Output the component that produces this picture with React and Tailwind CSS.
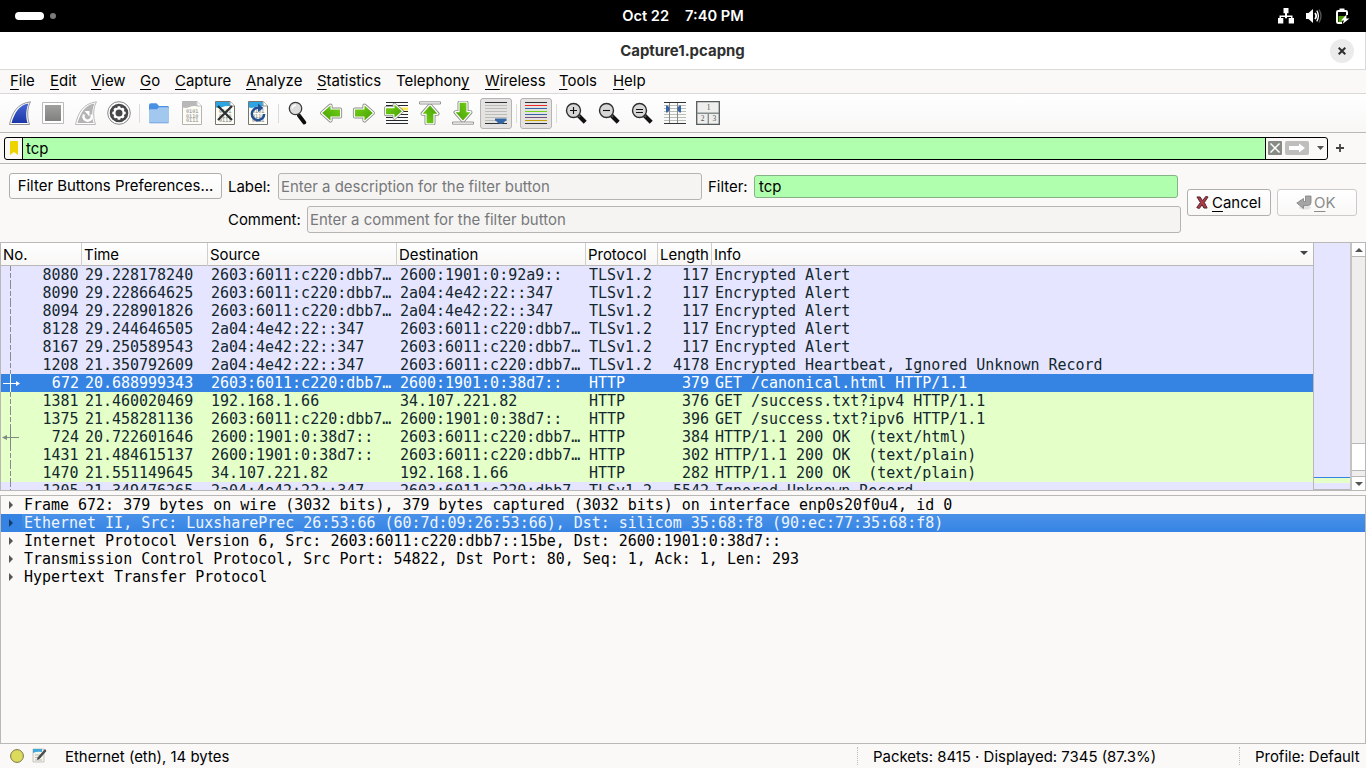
import React from 'react';

const Svg = ({ children, className = '' }) => (
  <svg viewBox="0 0 24 24" className={'h-6 w-6 ' + className}>{children}</svg>
);
const Slot = ({ children }) => <div className="mr-[9px] flex h-6 w-6 shrink-0 items-center justify-center">{children}</div>;
const Sep = () => <div className="-ml-px mr-[7px] h-[19px] w-px shrink-0 bg-[#dcdbda]" />;

const FIN = 'M1.5 23.5C4 12 9 2.5 22.5.8C19.5 6 18.5 15 21.5 23.5Z';
const FIN_IN = 'M3.5 22C6.5 12 11 4 20.5 2.5C18 8 17.5 16 19.6 22Z';

function Doc({ gray, children }) {
  return (
    <Svg>
      <path d="M2.5.5H17L21.5 5V23.5H2.5Z" fill="#fdfdf6" stroke={gray ? '#b4b4b4' : '#74766f'} />
      <path d="M3 1H16.5L17 5.5C11 3.5 8 8.5 3 6.5Z" fill={gray ? '#b9b9b9' : '#2da5e3'} />
      <path d="M17 .5V5H21.5" fill="#fff" stroke={gray ? '#b4b4b4' : '#74766f'} strokeWidth=".8" />
      <g fontFamily="DejaVu Sans Mono, monospace" fontSize="5.2" fontWeight="700" fill={gray ? '#a6a6a6' : '#9c9d98'}>
        <text x="6" y="12">0101</text>
        <text x="6" y="16.5">0110</text>
        <text x="6" y="21">0111</text>
      </g>
      {children}
    </Svg>
  );
}

const ARROW_R = 'M3 8.6H12.5V4.6L20.8 12L12.5 19.4V15.4H3Z';
function Arrow({ transform }) {
  return (
    <g transform={transform}>
      <path d={ARROW_R} fill="#fff" stroke="#8b8d89" strokeWidth="4.2" strokeLinejoin="round" />
      <path d={ARROW_R} fill="#fff" stroke="#fff" strokeWidth="2.4" strokeLinejoin="round" />
      <path d={ARROW_R} fill="url(#green)" />
    </g>
  );
}

function Lens({ sign }) {
  return (
    <Svg>
      <path d="M14 14L21.2 21.2" stroke="#111" strokeWidth="4.2" />
      <path d="M13 13L16 16" stroke="#555" strokeWidth="2" />
      <circle cx="9.5" cy="9.5" r="7" fill="#d7d7d7" stroke="#2c2d2d" strokeWidth="1.4" />
      <path d={sign === '+' ? 'M6 9.5H13M9.5 6V13' : sign === '-' ? 'M6 9.5H13' : 'M6 8.5H13M6 11.5H13'} stroke="#111" strokeWidth="1.1" />
    </Svg>
  );
}

function Toolbar() {
  return (
    <div className="flex h-[39px] items-center border-b border-[#b9b8b6] bg-gradient-to-b from-white to-[#f8f7f6] pl-2">
      <Slot><Svg>
        <defs>
          <linearGradient id="green" x1="0" y1="0" x2="1" y2="1">
            <stop offset="0" stopColor="#73d216" />
            <stop offset="1" stopColor="#489f05" />
          </linearGradient>
          <linearGradient id="fin" x1="0" y1="0" x2="0" y2="1"><stop stopColor="#4866d7" /><stop offset="1" stopColor="#1a36a6" /></linearGradient>
        </defs>
        <path d={FIN} fill="#fff" stroke="#929292" /><path d={FIN_IN} fill="url(#fin)" />
      </Svg></Slot>
      <Slot><Svg>
        <defs><linearGradient id="stop" x1="0" y1="0" x2="0" y2="1"><stop stopColor="#a0a09e" /><stop offset="1" stopColor="#80807e" /></linearGradient></defs>
        <path d="M1.5 1.5H22.5V22.5H1.5Z" fill="#fff" stroke="#bababa" /><path d="M4 4H20V20H4Z" fill="url(#stop)" />
      </Svg></Slot>
      <Slot><Svg>
        <path d={FIN} fill="#fff" stroke="#bababa" /><path d={FIN_IN} fill="#b4b4b2" />
        <path d="M10 13.500A4.200 4.200 0 1 0 17.300 13.500" fill="none" stroke="#fff" strokeWidth="2.400" />
        <path d="M10.500 10H15.500V15.500Z" fill="#fff" />
      </Svg></Slot>
      <Slot><Svg>
        <circle cx="12" cy="12" r="11.300" fill="#fff" stroke="#868686" />
        <circle cx="12" cy="12" r="9.300" fill="#454647" />
        <circle cx="12" cy="12" r="4.600" fill="none" stroke="#fff" strokeWidth="2.200" />
        <g stroke="#fff" strokeWidth="2.600"><path d="M12 5.300V8M12 16V18.700M5.300 12H8M16 12H18.700M7.300 7.300L9 9M15 15L16.700 16.700M7.300 16.700L9 15M15 9L16.700 7.300" /></g>
      </Svg></Slot>
      <Sep />
      <Slot><Svg>
        <path d="M2 4.2Q2 2.3 4 2.3H9.5L12 5H20.5Q22 5 22 6.5V12H2Z" fill="#4a90e2" />
        <path d="M2 9.5Q2 8.2 3.3 8.2H10L12 6.2H20.7Q22 6.2 22 7.5V20.8Q22 22.2 20.5 22.2H3.5Q2 22.2 2 20.8Z" fill="#a3c8f0" />
        <path d="M2.4 21.7H21.6" stroke="#78aae3" />
      </Svg></Slot>
      <Slot><Doc gray /></Slot>
      <Slot><Doc><path d="M5 5L19 19M19 5L5 19" stroke="#2b3033" strokeWidth="2.2" /></Doc></Slot>
      <Slot><Doc><path d="M12.5 6.8A6.2 6.2 0 1 0 18.2 13" fill="none" stroke="#214f94" strokeWidth="2.4" /><path d="M12 2.5L17.5 7L12 11Z" fill="#214f94" /></Doc></Slot>
      <Sep />
      <Slot><Svg>
        <path d="M13 14.5L18.3 21.500" stroke="#0c0c0c" strokeWidth="3.800" strokeLinecap="round" />
        <path d="M12 12.800L14 15.500" stroke="#222" strokeWidth="2" />
        <circle cx="9.500" cy="7.500" r="6.200" fill="#dcdddd" stroke="#3b3b3b" strokeWidth="1.300" />
        <path d="M6.200 7.500A3.500 3.500 0 0 1 10 4.300" fill="none" stroke="#fff" strokeWidth="1.400" />
      </Svg></Slot>
      <Slot><Svg><Arrow transform="matrix(-1 0 0 1 24 0)" /></Svg></Slot>
      <Slot><Svg><Arrow /></Svg></Slot>
      <Slot><Svg className="overflow-visible">
        <path d="M1 1.5H23M1 4.5H23M1 16.5H23M1 19.5H23M1 22.5H23M1 13.5H23M1 10.5H23" stroke="#252b2c" />
        <path d="M16 6.500H23V9.500H16Z" fill="#fce94f" />
        <Arrow transform="translate(-1.800 -.600) scale(.9)" />
      </Svg></Slot>
      <Slot><Svg>
        <Arrow transform="translate(0 25.200) rotate(-90)" />
        <path d="M1.500 .8H22.500V3H1.500Z" fill="#fff" stroke="#8b8d89" strokeWidth=".9" />
      </Svg></Slot>
      <Slot><Svg>
        <Arrow transform="translate(24 -1.200) rotate(90)" />
        <path d="M1.500 21H22.500V23.200H1.500Z" fill="#fff" stroke="#8b8d89" strokeWidth=".9" />
      </Svg></Slot>
      <div className="-ml-1 mr-[5px] flex h-[31px] w-8 shrink-0 items-center justify-center rounded-[3px] border border-[#b5b4b2] bg-[#e4e3e1]"><Svg>
        <path d="M1 1.5H23M1 22.5H23" stroke="#2e3436" />
        <path d="M1 4.5H23M1 7.5H23M1 10.5H23M1 13.5H23M1 16.5H23M1 19.5H23" stroke="#babdb6" />
        <path d="M11 17.5H22.5V19.5Q20.5 20 19.5 22Q17 24 14 22Q13 20 11 19.5Z" fill="#3465a4" />
      </Svg></div>
      <Sep />
      <div className="-ml-1 mr-[5px] flex h-[31px] w-8 shrink-0 items-center justify-center rounded-[3px] border border-[#b5b4b2] bg-[#e4e3e1]"><Svg>
        <path d="M1 1.5H23M1 22.5H23" stroke="#2e3436" />
        <path d="M1 4.5H23" stroke="#ef2929" /><path d="M1 7.5H23" stroke="#3465a4" />
        <path d="M1 10.5H23" stroke="#73d216" /><path d="M1 13.5H23" stroke="#3465a4" />
        <path d="M1 16.5H23" stroke="#75507b" /><path d="M1 19.5H23" stroke="#c4a000" />
      </Svg></div>
      <Sep />
      <Slot><Lens sign="+" /></Slot>
      <Slot><Lens sign="-" /></Slot>
      <Slot><Lens sign="=" /></Slot>
      <Slot><Svg>
        <path d="M1 4.5H23M1 7.5H23M1 10.5H23M1 13.5H23M1 16.5H23M1 19.5H23" stroke="#babdb6" />
        <path d="M1 1.5H23M1 22.5H23" stroke="#2e3436" />
        <path d="M6.5 2V22M14.5 2V22" stroke="#888a85" />
        <path d="M3 4.5H4.5L6.5 6.5V9L4.5 11.5H3ZM18 4.5H16.5L14.5 6.5V9L16.5 11.5H18Z" fill="#3465a4" />
      </Svg></Slot>
      <Slot><Svg>
        <path d="M.7 .7H23.3V23.3H.7Z" fill="#eeeeec" stroke="#555a5c" strokeWidth="1.3" />
        <path d="M1 12.3H23M12.3 12V23" stroke="#888c8d" strokeWidth="1.4" />
        <g fontFamily="Liberation Serif, serif" fontSize="7.5" fill="#555" textAnchor="middle"><text x="12.5" y="9.3">1</text><text x="6.5" y="20.3">2</text><text x="18.3" y="20.3">3</text></g>
      </Svg></Slot>
    </div>
  );
}

const U = ({ children }) => <span className="underline decoration-1 underline-offset-[3px] [text-decoration-skip-ink:none]">{children}</span>;

function MenuBar() {
  return (
    <div className="flex h-6 items-start border-b border-[#dad9d7] bg-[#faf9f8] pl-2.5 leading-[22px]">
      <div className="w-10"><U>F</U>ile</div>
      <div className="w-[41px]"><U>E</U>dit</div>
      <div className="w-[49px]"><U>V</U>iew</div>
      <div className="w-[35px]"><U>G</U>o</div>
      <div className="w-[71px]"><U>C</U>apture</div>
      <div className="w-[71px]"><U>A</U>nalyze</div>
      <div className="w-[79px]"><U>S</U>tatistics</div>
      <div className="w-[89px]">Telephon<U>y</U></div>
      <div className="w-[74px]"><U>W</U>ireless</div>
      <div className="w-[54px]"><U>T</U>ools</div>
      <div><U>H</U>elp</div>
    </div>
  );
}

function TopBar() {
  return (
    <div className="grid h-8 grid-cols-[1fr_auto_1fr] items-center bg-black text-white">
      <div className="flex items-center pl-[15px]">
        <div className="h-2 w-[29px] rounded-full bg-white" />
        <div className="ml-1.5 h-[6px] w-[6px] rounded-full bg-[#7b7b7b]" />
      </div>
      <div className="flex gap-4 text-[14.67px] font-semibold"><span>Oct 22</span><span>7:40 PM</span></div>
      <div className="flex items-center justify-end pr-4">
        <svg viewBox="0 0 16 16" className="mr-3 h-4 w-4"><path d="M5.500 0h5v5.200H9V7.500h5.500V10H16v5.500h-5.300V10H13V9H9V10.300H7V9H3V10H5.300v5.500H0V10H1.500V7.500H7V5.200H5.500Z" fill="#fff" /></svg>
        <svg viewBox="0 0 16 16" className="mr-3 h-4 w-4"><path d="M0 5H2.500L7 .9V15L2.500 11H0Z" fill="#fff" /><path d="M9 5Q11.400 8 9 11" fill="none" stroke="#fff" strokeWidth="1.800" /><path d="M10.800 2.700Q14 8 10.800 13.300" fill="none" stroke="#fff" strokeWidth="1.300" /><path d="M13 1.500Q17 8 13 14.500" fill="none" stroke="#555" strokeWidth="1.400" /></svg>
        <svg viewBox="0 0 16 16" className="h-4 w-4"><path d="M8 15H4.200Q3 15 3 13.800V4.200Q3 3 4.200 3H11.800Q13 3 13 4.200V7" fill="none" stroke="#fff" strokeWidth="2" /><path d="M5.500 0.500H10.500V3H5.500Z" fill="#fff" /><path d="M4.500 8H11.500L8 14H4.500Z" fill="#4e9a06" /><path d="M12.500 6.500L7 12.500H10L8.500 16L15.500 10.500H12.300Z" fill="#fff" /></svg>
      </div>
    </div>
  );
}

function FilterBar() {
  return (
    <div className="flex h-[31px] items-center border-b border-[#b9b8b6] bg-[#faf9f8] pl-1">
      <div className="flex h-[23px] w-[1324px] items-center overflow-hidden rounded-[3px] border border-black bg-[#faf9f8]">
        <div className="flex h-full w-[18px] items-center justify-center border-r border-black">
          <svg viewBox="0 0 8 14" className="h-[14px] w-2"><path d="M0 1Q0 0 1 0H7Q8 0 8 1V14L4 11L0 14Z" fill="#edd400" /></svg>
        </div>
        <div className="h-full grow bg-[#afffaf] pl-[3px] leading-[23px]">tcp</div>
        <div className="flex h-full w-[62px] items-center border-l border-black pl-0.5">
          <svg viewBox="0 0 14 14" className="h-3.5 w-3.5"><rect width="14" height="14" rx="1" fill="#888a85" /><path d="M2.500 2.500L11.500 11.500M11.500 2.500L2.500 11.500" stroke="#fff" strokeWidth="1.500" /></svg>
          <svg viewBox="0 0 24 14" className="ml-[3px] h-3.5 w-6"><rect width="24" height="14" rx="2" fill="#bebebc" /><path d="M4 5H14V2.500L20 7L14 11.500V9H4Z" fill="#fff" /></svg>
          <svg viewBox="0 0 7 4" className="ml-2 h-1 w-[7px]"><path d="M0 0H7L3.500 4Z" fill="#555" /></svg>
        </div>
      </div>
      <svg viewBox="0 0 8 8" className="ml-2 h-2 w-2"><path d="M4 0V8M0 4H8" stroke="#444" strokeWidth="1.800" /></svg>
    </div>
  );
}

const field = 'h-[27px] rounded-[3px] border border-[#b5b4b2] bg-[#f5f4f3] pl-0.5 leading-[27px] text-[#77787a]';
function FilterForm() {
  return (
    <div className="flex h-[78px] bg-[#faf9f8] pl-[9px]">
      <div className="mt-[9px] flex h-[26px] w-[213px] items-center justify-center rounded-[3px] border border-[#b0afad] bg-gradient-to-b from-white to-[#f9f8f7] whitespace-nowrap">Filter Buttons Preferences...</div>
      <div className="ml-1.5 flex w-[953px] flex-col gap-[6px] pt-[9px]">
        <div className="flex items-center">
          <div className="w-[50px]">Label:</div>
          <div className={field + ' w-[424px]'}>Enter a description for the filter button</div>
          <div className="ml-1.5 w-[46px]">Filter:</div>
          <div className="h-[23px] w-[424px] rounded-[3px] border border-[#86b386] bg-[#afffaf] pl-1 leading-[22px]">tcp</div>
        </div>
        <div className="flex items-center">
          <div className="w-[79px]">Comment:</div>
          <div className={field + ' w-[874px]'}>Enter a comment for the filter button</div>
        </div>
      </div>
      <div className="ml-1.5 mt-[25px] flex h-[27px] w-[84px] items-center rounded-[3px] border border-[#b0afad] bg-gradient-to-b from-white to-[#f9f8f7] pl-2">
        <svg viewBox="0 0 14 15" className="mr-[3px] h-[15px] w-[13px]"><path d="M1 1.500H4.500L7 5.500L10.500 1L13 1.500L9 7.500L12 13.500H8.500L6.500 10L3.500 14L.8 13L4.700 7.500Z" fill="#ad3b48" stroke="#4c2529" strokeWidth="1" /></svg>
        <span><U>C</U>ancel</span>
      </div>
      <div className="ml-1.5 mt-[25px] flex h-[27px] w-[80px] items-center rounded-[3px] border border-[#cccbca] bg-gradient-to-b from-white to-[#f9f8f7] pl-[18px] text-[#8b8c8c]">
        <svg viewBox="0 0 16 15" className="mr-0.5 h-[15px] w-4"><ellipse cx="9" cy="12.500" rx="6" ry="2" fill="#e2e2e1" /><path d="M9.500 1H15V7.500Q15 10.500 11.500 10.500H7.500V13.500L.8 8L7.500 3.500V6.500H9.500Z" fill="#a5a5a5" stroke="#7f7f7f" strokeWidth=".8" /></svg>
        <span><U>O</U>K</span>
      </div>
    </div>
  );
}

const S = '2603:6011:c220:dbb7…';
const rows = [
  ['8080', '29.228178240', S, '2600:1901:0:92a9::', 'TLSv1.2', '117', 'Encrypted Alert', 'p'],
  ['8090', '29.228664625', S, '2a04:4e42:22::347', 'TLSv1.2', '117', 'Encrypted Alert', 'p'],
  ['8094', '29.228901826', S, '2a04:4e42:22::347', 'TLSv1.2', '117', 'Encrypted Alert', 'p'],
  ['8128', '29.244646505', '2a04:4e42:22::347', S, 'TLSv1.2', '117', 'Encrypted Alert', 'p'],
  ['8167', '29.250589543', '2a04:4e42:22::347', S, 'TLSv1.2', '117', 'Encrypted Alert', 'p'],
  ['1208', '21.350792609', '2a04:4e42:22::347', S, 'TLSv1.2', '4178', 'Encrypted Heartbeat, Ignored Unknown Record', 'p'],
  ['672', '20.688999343', S, '2600:1901:0:38d7::', 'HTTP', '379', 'GET /canonical.html HTTP/1.1', 's'],
  ['1381', '21.460020469', '192.168.1.66', '34.107.221.82', 'HTTP', '376', 'GET /success.txt?ipv4 HTTP/1.1', 'g'],
  ['1375', '21.458281136', S, '2600:1901:0:38d7::', 'HTTP', '396', 'GET /success.txt?ipv6 HTTP/1.1', 'g'],
  ['724', '20.722601646', '2600:1901:0:38d7::', S, 'HTTP', '384', 'HTTP/1.1 200 OK  (text/html)', 'r'],
  ['1431', '21.484615137', '2600:1901:0:38d7::', S, 'HTTP', '302', 'HTTP/1.1 200 OK  (text/plain)', 'g'],
  ['1470', '21.551149645', '34.107.221.82', '192.168.1.66', 'HTTP', '282', 'HTTP/1.1 200 OK  (text/plain)', 'g'],
  ['1205', '21.349476265', '2a04:4e42:22::347', S, 'TLSv1.2', '5542', 'Ignored Unknown Record', 'p'],
];
const tone = {
  p: 'bg-[#e6e5ff] text-[#12272e]',
  g: 'bg-[#e4ffc7] text-[#12272e]',
  r: 'bg-[#e4ffc7] text-[#12272e]',
  s: 'bg-[#3584e4] text-white',
};
const cols = 'grid grid-cols-[81px_126px_189px_189px_72px_54px_1fr]';

// Monospace cell text, slightly condensed so that one character is 9px wide.
const Mono = ({ children, right }) => (
  <span className={right ? 'block origin-right scale-x-[.9355] text-right' : 'block w-fit origin-left scale-x-[.9355]'}>{children}</span>
);

function Marker({ kind }) {
  return (
    <svg viewBox="0 0 22 18" className="h-[18px] w-[22px]">
      {kind === 's' ? <g stroke="#fff" fill="#fff"><path d="M9.500 0V18M2 9.500H15" /><path d="M15 7L19 9.500L15 12Z" stroke="none" /></g>
        : kind === 'r' ? <g stroke="#7f8a84" fill="#7f8a84"><path d="M9.500 0V18M5 9.500H18" /><path d="M6 7L1 9.500L6 12Z" stroke="none" /></g>
        : <path d="M9.500 0V18" stroke="#878b94" strokeDasharray="5 2" />}
    </svg>
  );
}

function PacketList() {
  return (
    <div className="flex h-[249px] border border-[#b9b8b6]">
      <div className="flex w-[1313px] flex-col overflow-hidden border-r border-[#b9b8b6]">
        <div className={cols + ' h-[23px] shrink-0 border-b border-[#b9b8b6] bg-gradient-to-b from-white to-[#f8f7f6] leading-[24px]'}>
          {['No.', 'Time', 'Source', 'Destination', 'Protocol', 'Length'].map((h) => (
            <div key={h} className="border-r border-[#d0cfcd] pl-0.5">{h}</div>
          ))}
          <div className="flex items-center justify-between pr-[5px] pl-0.5"><span>Info</span>
            <svg viewBox="0 0 8 4" className="mb-1 h-1 w-2"><path d="M0 0H8L4 4Z" fill="#444" /></svg>
          </div>
        </div>
        {rows.map((r) => (
          <div key={r[0]} className={cols + ' h-[18px] shrink-0 font-["DejaVu_Sans_Mono",monospace] text-[16px] leading-[18px] whitespace-pre ' + tone[r[7]]}>
            <div className="flex justify-between pr-[3px]"><Marker kind={r[7]} /><Mono right>{r[0]}</Mono></div>
            <div className="pl-[3px]"><Mono>{r[1]}</Mono></div>
            <div className="pl-[3px]"><Mono>{r[2]}</Mono></div>
            <div className="pl-[3px]"><Mono>{r[3]}</Mono></div>
            <div className="pl-[3px]"><Mono>{r[4]}</Mono></div>
            <div className="pr-[3px]"><Mono right>{r[5]}</Mono></div>
            <div className="pl-[3px]"><Mono>{r[6]}</Mono></div>
          </div>
        ))}
      </div>
      <div className="flex w-9 flex-col bg-[#e6e5ff]">
        <div className="mt-[234px] h-px bg-[#3584e4]" />
        <div className="h-[5px] bg-[#e4ffc7]" />
        <div className="mt-auto h-px bg-[#b9b8b6]" />
      </div>
      <div className="flex grow flex-col border-l-2 border-[#c4c3c1] bg-[#efeeed]">
        <div className="flex h-[14px] items-center justify-center border-b border-[#b9b8b6] bg-white"><svg viewBox="0 0 8 4" className="h-1 w-2"><path d="M0 4H8L4 0Z" fill="#555" /></svg></div>
        <div className="mt-[186px] h-7 border-y border-[#b9b8b6] bg-white" />
        <div className="mt-auto flex h-[14px] items-center justify-center border-t border-[#b9b8b6] bg-white"><svg viewBox="0 0 8 4" className="h-1 w-2"><path d="M0 0H8L4 4Z" fill="#555" /></svg></div>
      </div>
    </div>
  );
}

const details = [
  'Frame 672: 379 bytes on wire (3032 bits), 379 bytes captured (3032 bits) on interface enp0s20f0u4, id 0',
  'Ethernet II, Src: LuxsharePrec_26:53:66 (60:7d:09:26:53:66), Dst: silicom_35:68:f8 (90:ec:77:35:68:f8)',
  'Internet Protocol Version 6, Src: 2603:6011:c220:dbb7::15be, Dst: 2600:1901:0:38d7::',
  'Transmission Control Protocol, Src Port: 54822, Dst Port: 80, Seq: 1, Ack: 1, Len: 293',
  'Hypertext Transfer Protocol',
];

function Details() {
  return (
    <div className="mt-1 h-[249px] border border-[#b9b8b6] bg-[#faf9f8] font-['DejaVu_Sans_Mono',monospace] text-[16px] leading-[18px] whitespace-pre">
      {details.map((d, i) => (
        <div key={d} className={'flex h-[18px] items-center pl-2 ' + (i === 1 ? 'bg-[#3584e4] text-[#eef5ff]' : 'text-black')}>
          <svg viewBox="0 0 4 8" className="mr-[9px] h-2 w-1"><path d="M0 0L4 4L0 8Z" fill={i === 1 ? '#173c69' : '#555'} /></svg>
          <div className={'h-[18px] grow pl-0.5 ' + (i === 1 ? 'bg-gradient-to-b from-[#4a92e9] to-[#3584e4]' : '')}><Mono>{d}</Mono></div>
        </div>
      ))}
    </div>
  );
}

function StatusBar() {
  return (
    <div className="flex h-6 items-center bg-[#faf9f8] pl-2.5">
      <svg viewBox="0 0 14 14" className="h-3.5 w-3.5"><circle cx="7" cy="7" r="6.400" fill="#dddb5c" stroke="#777746" /></svg>
      <svg viewBox="0 0 16 16" className="ml-2 h-4 w-4"><path d="M1 1H12V14H1Z" fill="#f4f4ed" stroke="#b0b0aa" strokeWidth=".7" /><path d="M1 1H10V4Q5 3 1 5Z" fill="#3fa9dc" /><path d="M3 7H8M3 9.500H9M3 12H10" stroke="#b7b8b2" /><path d="M13 1.500L6 9.500L5.500 11.500L7.500 10.500L14 3Z" fill="#4b5052" stroke="#333" strokeWidth=".7" /></svg>
      <div className="mt-px ml-[17px] w-[792px]">Ethernet (eth), 14 bytes</div>
      <div className="h-[18px] border-l border-dotted border-[#bbb]" />
      <div className="mt-px w-[381px] pl-[15px]">Packets: 8415 · Displayed: 7345 (87.3%)</div>
      <div className="h-[18px] border-l border-dotted border-[#bbb]" />
      <div className="mt-px pl-[15px] whitespace-nowrap">Profile: Default</div>
    </div>
  );
}

export default function App() {
  return (
    <div className="flex h-[768px] w-[1366px] flex-col overflow-hidden bg-[#faf9f8] font-[Inter,sans-serif] text-[14.95px] leading-5 text-black">
      <TopBar />
      <div className="grid h-[38px] grid-cols-[1fr_auto_1fr] items-center border-r border-b border-[#dad9d7] bg-white">
        <span />
        <div className="font-bold text-[#303030]">Capture1.pcapng</div>
        <div className="flex justify-end pr-[11px]">
          <div className="flex h-6 w-6 items-center justify-center rounded-full bg-[#ebebeb]"><svg viewBox="0 0 8 8" className="h-2 w-2"><path d="M.7.7L7.300 7.300M7.300.7L.7 7.300" stroke="#2e2e2e" strokeWidth="2" /></svg></div>
        </div>
      </div>
      <MenuBar />
      <Toolbar />
      <FilterBar />
      <FilterForm />
      <PacketList />
      <Details />
      <StatusBar />
    </div>
  );
}
